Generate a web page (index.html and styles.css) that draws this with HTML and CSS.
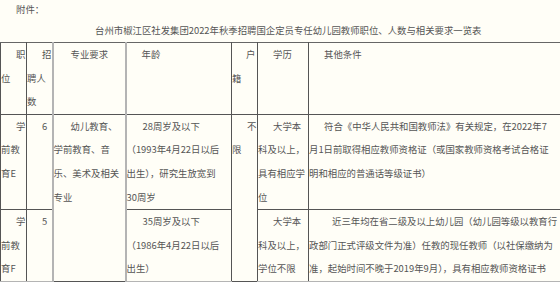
FILE: index.html
```html
<!DOCTYPE html>
<html lang="zh-CN">
<head>
<meta charset="utf-8">
<title>附件</title>
<link rel="stylesheet" href="styles.css">
</head>
<body>
<p class="attach">附件：</p>
<p class="title">台州市椒江区社发集团2022年秋季招聘国企定员专任幼儿园教师职位、人数与相关要求一览表</p>
<table class="jobs">
  <colgroup>
    <col class="c1"><col class="c2"><col class="c3"><col class="c4"><col class="c5"><col class="c6"><col class="c7">
  </colgroup>
  <tr>
    <td class="dark-r">职<br>位</td>
    <td class="soft-r">招<br>聘人<br>数</td>
    <td class="soft-r ind17">专业要求</td>
    <td class="dark-r">年龄</td>
    <td class="dark-r ind14">户<br>籍</td>
    <td class="dark-r">学历</td>
    <td>其他条件</td>
  </tr>
  <tr>
    <td class="dark-r">学<br>前教<br>育E</td>
    <td class="soft-r">6</td>
    <td class="soft-r ind17" rowspan="2">幼儿教育、<br>学前教育、音<br>乐、美术及相关<br>专业</td>
    <td class="dark-r ind16">28周岁及以下<br>（1993年4月22日以后<br>出生），研究生放宽到<br>30周岁</td>
    <td class="dark-r" rowspan="2">不<br>限</td>
    <td class="dark-r">大学本<br>科及以上，<br>具有相应学<br>位</td>
    <td>符合《中华人民共和国教师法》有关规定，在2022年7<br>月1日前取得相应教师资格证（或国家教师资格考试合格证<br>明和相应的普通话等级证书）</td>
  </tr>
  <tr class="last">
    <td class="dark-r">学<br>前教<br>育F</td>
    <td class="soft-r">5</td>
    <td class="dark-r ind16">35周岁及以下<br>（1986年4月22日以后<br>出生）</td>
    <td class="dark-r">大学本<br>科及以上，<br>学位不限</td>
    <td class="ind23">近三年均在省二级及以上幼儿园（幼儿园等级以教育行<br>政部门正式评级文件为准）任教的现任教师（以社保缴纳为<br>准，起始时间不晚于2019年9月），具有相应教师资格证书</td>
  </tr>
</table>
</body>
</html>
```

FILE: styles.css
```css
html, body {
  margin: 0;
  padding: 0;
  overflow: hidden;
  background: #fffef7;
}

body {
  font-family: "Noto Sans CJK SC", "Noto Sans", sans-serif;
  font-size: 9.4px;
  color: #555;
  width: 560px;
}

.attach {
  margin: 0;
  padding-left: 16px;
  line-height: 18px;
  height: 18px;
}

.title {
  margin: 0;
  line-height: 24px;
  height: 24px;
  padding-left: 95px;
  white-space: nowrap;
}

.jobs {
  border-collapse: collapse;
  table-layout: fixed;
  width: 568px;
  border-top: 1px solid #666;
  border-left: 1px solid #555;
}

.c1 { width: 26px; }
.c2 { width: 26px; }
.c3 { width: 73px; }
.c4 { width: 106px; }
.c5 { width: 26px; }
.c6 { width: 51px; }
.c7 { width: 260px; }

.jobs td {
  padding: 0;
  vertical-align: top;
  line-height: 23.6px;
  text-indent: 15px;
  border-bottom: 1px solid #555;
  white-space: nowrap;
  overflow: visible;
}

.jobs .dark-r { border-right: 1px solid #555; }
.jobs .soft-r { border-right: 2px solid #b4b4b4; }
.jobs .ind14 { text-indent: 14px; }
.jobs .ind16 { text-indent: 16px; }
.jobs .ind17 { text-indent: 17px; }
.jobs .ind23 { text-indent: 23px; }

.jobs tr.last td { border-bottom: 2px solid #b4b4b4; }
```
